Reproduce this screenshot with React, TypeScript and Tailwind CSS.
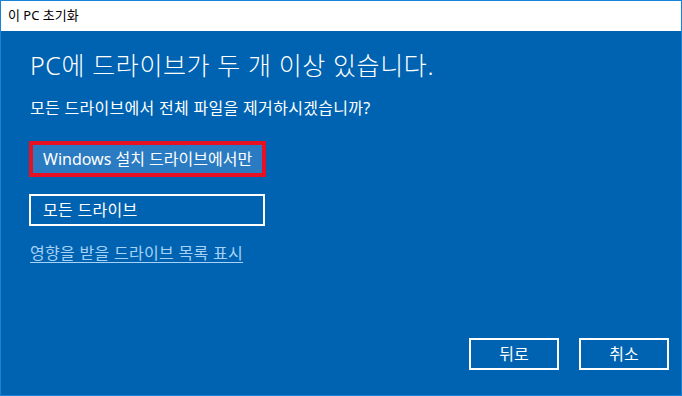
import React from "react";

const font = { fontFamily: '"Noto Sans", "Noto Sans CJK KR", sans-serif' };

export default function App() {
  return (
    <div
      className="flex h-[396px] w-[682px] flex-col border border-[#1883d7] bg-[#0063b1] text-white"
      style={font}
    >
      {/* Title bar */}
      <div className="flex h-[30px] shrink-0 items-center bg-white pl-[7px] text-[13px] text-black">
        이 PC 초기화
      </div>

      {/* Content */}
      <div className="flex flex-1 flex-col pl-[29px]">
        <h1 className="mt-[18px] text-[25px] font-light leading-[32px] tracking-[0.6px]">
          PC에 드라이브가 두 개 이상 있습니다.
        </h1>
        <p className="mt-[17px] text-[16px] leading-[20px] tracking-[0.3px]">
          모든 드라이브에서 전체 파일을 제거하시겠습니까?
        </p>

        <div className="mt-[23px] flex h-[36px] w-[237px] -ml-px items-center border-[4px] border-[#e81123] bg-[#2b7bc2] pl-[10px] text-[16px]">
          Windows 설치 드라이브에서만
        </div>
        <div className="mt-[17px] flex h-[32px] w-[236px] -ml-px items-center border-2 border-white pl-[12px] text-[16px] tracking-[0.3px]">
          모든 드라이브
        </div>

        <a className="mt-[17px] w-fit text-[16px] leading-[20px] tracking-[0.3px] text-[#a6d2f5] underline underline-offset-[3px]">
          영향을 받을 드라이브 목록 표시
        </a>

        <div className="mt-auto mb-[25px] mr-[12px] flex justify-end gap-[20px]">
          <div className="flex h-[32px] w-[90px] items-center justify-center border-2 border-white text-[16px]">
            뒤로
          </div>
          <div className="flex h-[32px] w-[90px] items-center justify-center border-2 border-white text-[16px]">
            취소
          </div>
        </div>
      </div>
    </div>
  );
}
